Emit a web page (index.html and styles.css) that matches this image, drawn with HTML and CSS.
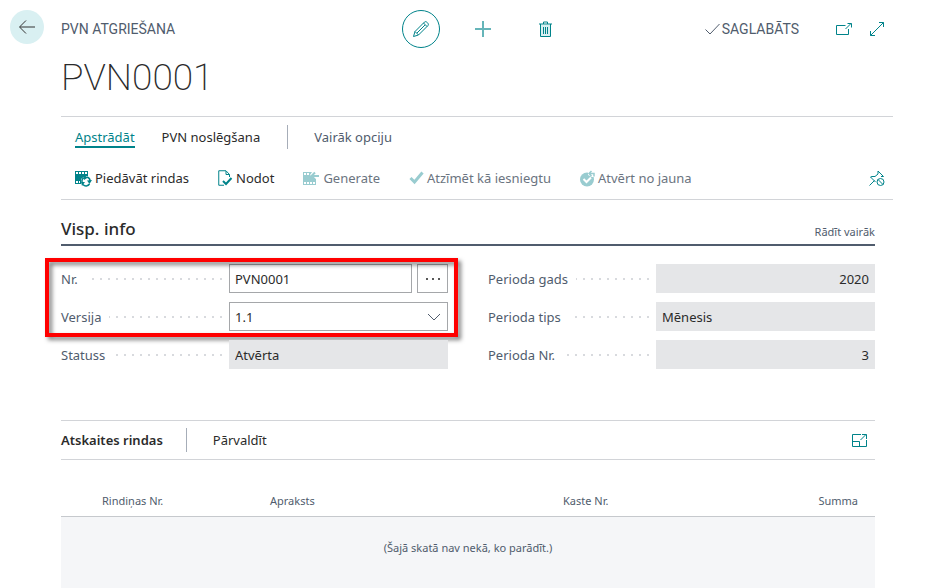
FILE: index.html
```html
<!DOCTYPE html>
<html lang="lv">
<head>
<meta charset="utf-8">
<title>PVN0001</title>
<link rel="stylesheet" href="styles.css">
</head>
<body>
<div class="page">
  <div class="side">
    <button class="back" type="button" aria-label="Atpakaļ">
      <svg width="18" height="16" viewBox="0 0 18 16"><path d="M17 8H2M8 1.500L1.500 8L8 14.500"/></svg>
    </button>
  </div>
  <main class="main">
    <header class="topbar">
      <span class="caption">PVN ATGRIEŠANA</span>
      <div class="tools">
        <button class="tool tool-edit" type="button" aria-label="Rediģēt">
          <svg width="18" height="18" viewBox="0 0 18 18"><path d="M1.500 16.500L3 11.500L12.500 2C14 .5 17.500 4 16 5.500L6.500 15ZM3 11.500L6.500 15M11.500 3L15 6.500M5 13L13 5"/></svg>
        </button>
        <button class="tool tool-add" type="button" aria-label="Jauns">
          <svg width="16" height="16" viewBox="0 0 16 16"><path d="M8 0V16M0 8H16"/></svg>
        </button>
        <button class="tool tool-delete" type="button" aria-label="Dzēst">
          <svg width="13" height="17" viewBox="0 0 13 17"><path class="tint" d="M1.500 3.500H11.500V16H1.500Z"/><path d="M0 3H13M4.500 3V1H8.500V3M1.500 3V15.500H11.500V3M4.500 6V13M6.500 6V13M8.500 6V13"/></svg>
        </button>
      </div>
      <div class="status">
        <span class="saved"><svg width="15" height="12" viewBox="0 0 15 12"><path d="M.5 6.500L5 11L14.500 1"/></svg>SAGLABĀTS</span>
        <button class="tool open" type="button" aria-label="Atvērt jaunā logā">
          <svg width="16" height="12" viewBox="0 0 16 12"><path d="M9.500 2.500H.5V11.500H12.500V6M9.500 6L15 .5M11.500 .5H15.500V4.500"/></svg>
        </button>
        <button class="tool" type="button" aria-label="Izvērst">
          <svg width="16" height="16" viewBox="0 0 16 16"><path d="M1.500 14.500L14.500 1.500M10 1.500H14.500V6M1.500 10V14.500H6"/></svg>
        </button>
      </div>
    </header>
    <h1 class="title">PVN0001</h1>

    <nav class="menu">
      <div class="tabs">
        <a class="tab tab-active" href="#">Apstrādāt</a>
        <a class="tab" href="#">PVN noslēgšana</a>
        <a class="tab tab-more" href="#">Vairāk opciju</a>
      </div>
      <div class="actions">
        <button class="action" type="button">
          <svg width="17" height="17" viewBox="0 0 17 17"><path class="fill" d="M0 1H13V6L10 6L6 9V14H0Z"/><path class="hole" d="M1 2H3V4H1ZM4 2H6V4H4ZM7 2H9V4H7ZM10 2H12V4H10ZM1 11H3V13H1ZM4 11H5V13H4Z"/><path class="line bold" d="M7 12A4 4 0 0 1 10 7.500M12 7A4 4 0 0 1 15 11M14.500 14A4 4 0 0 1 8 14.500"/><path class="fill" d="M9 5L13 7.500L9 10ZM17 10L14.500 14L12 10.500ZM6 12H10L7 16Z"/></svg>
          Piedāvāt rindas</button>
        <button class="action" type="button">
          <svg width="15" height="17" viewBox="0 0 15 17"><path class="line" d="M11.500 7V4.500L8 .75H.75V15.250H6M8 1V4.500H11.500"/><path class="line thick" d="M5 11L8 14L13.500 8"/></svg>
          Nodot</button>
        <button class="action action-off" type="button">
          <svg width="17" height="15" viewBox="0 0 17 15"><path class="fill" d="M0 1H9L7 4L11 8H13V14H0Z"/><path class="hole" d="M1 2H3V4H1ZM4 2H6V4H4ZM1 11H3V13H1ZM4 11H6V13H4ZM7 11H9V13H7ZM10 11H12V13H10Z"/><path class="line thick" d="M16 5H9M12 1.500L8.500 5L12 8.500"/></svg>
          Generate</button>
        <button class="action action-off" type="button">
          <svg width="15" height="14" viewBox="0 0 15 14"><path class="line heavy" d="M1.500 7L5.500 11L13.500 1.500"/></svg>
          Atzīmēt kā iesniegtu</button>
        <button class="action action-off" type="button">
          <svg width="15" height="17" viewBox="0 0 15 17"><circle class="fill" cx="7" cy="9.500" r="7"/><path class="hole" d="M8 0H15V7H12L8 5Z"/><path class="check" d="M3.500 9L6.500 12L11 7.500"/><path class="line bold" d="M9 3.500H14V6.500M11.500 1L9 3.500L11.500 6"/></svg>
          Atvērt no jauna</button>
        <button class="action pin" type="button" aria-label="Atspraust">
          <svg width="16" height="17" viewBox="0 0 16 17"><path class="line" d="M.5 15.500L5.500 10.500M6.500 12L1.500 7L3 6.500H6L9 4V1L14.500 6.500H12"/><circle class="line" cx="11.500" cy="12" r="3.500"/><path class="line" d="M9 9.500L14 14.500"/></svg>
        </button>
      </div>
    </nav>

    <div class="content">
      <section>
        <div class="section-head">
          <h2 class="section-title">Visp. info</h2>
          <a class="show-more" href="#">Rādīt vairāk</a>
        </div>
        <form class="fields">
          <div class="column">
            <div class="marked">
              <div class="field">
                <label class="label" for="nr">Nr.</label>
                <div class="value">
                  <input class="box" id="nr" type="text" value="PVN0001">
                  <button class="lookup" type="button" aria-label="Izvēlēties"><svg width="16" height="4" viewBox="0 0 16 4"><circle cx="2" cy="2" r="1"/><circle cx="8" cy="2" r="1"/><circle cx="14" cy="2" r="1"/></svg></button>
                </div>
              </div>
              <div class="field">
                <label class="label" for="versija">Versija</label>
                <div class="value">
                  <select class="box" id="versija"><option>1.1</option></select>
                  <svg class="chevron" width="14" height="8" viewBox="0 0 14 8"><path d="M1 1L7 7L13 1"/></svg>
                </div>
              </div>
            </div>
            <div class="field">
              <label class="label" for="statuss">Statuss</label>
              <div class="value"><input class="box box-off" id="statuss" type="text" value="Atvērta" readonly></div>
            </div>
          </div>
          <div class="column">
            <div class="field">
              <label class="label" for="gads">Perioda gads</label>
              <div class="value"><input class="box box-off number" id="gads" type="text" value="2020" readonly></div>
            </div>
            <div class="field">
              <label class="label" for="tips">Perioda tips</label>
              <div class="value"><input class="box box-off" id="tips" type="text" value="Mēnesis" readonly></div>
            </div>
            <div class="field">
              <label class="label" for="pnr">Perioda Nr.</label>
              <div class="value"><input class="box box-off number" id="pnr" type="text" value="3" readonly></div>
            </div>
          </div>
        </form>
      </section>

      <section class="lines">
        <div class="lines-bar">
          <h2 class="lines-title">Atskaites rindas</h2>
          <a class="manage" href="#">Pārvaldīt</a>
          <button class="tool focus" type="button" aria-label="Fokusa režīms">
            <svg width="15" height="13" viewBox="0 0 15 13"><path d="M9 .5H.5V12.500H14.500V6M.5 7.500H7.500V12.500M8.500 6L14 .5M10 .5H14.500V5"/></svg>
          </button>
        </div>
        <table class="grid">
          <thead>
            <tr><th class="col-line">Rindiņas Nr.</th><th class="col-text">Apraksts</th><th>Kaste Nr.</th><th class="col-sum">Summa</th></tr>
          </thead>
          <tbody>
            <tr><td class="empty" colspan="4">(Šajā skatā nav nekā, ko parādīt.)</td></tr>
          </tbody>
        </table>
      </section>
    </div>
  </main>
</div>
</body>
</html>
```
FILE: styles.css
```css
* { box-sizing: border-box; }

body {
  margin: 0;
  background: #fff;
  color: #2b2b2b;
  font: 13px/20px "Noto Sans", "Open Sans", sans-serif;
}

a { color: inherit; text-decoration: none; }

button {
  display: flex;
  align-items: center;
  justify-content: center;
  padding: 0;
  border: 0;
  background: none;
  color: inherit;
  font: inherit;
}

svg { display: block; flex: none; fill: none; stroke: currentColor; }

.page {
  display: grid;
  grid-template-columns: 51px 1fr;
  padding: 10px 37px 0 10px;
}

.back {
  width: 34px;
  height: 34px;
  border-radius: 50%;
  background: #d9f0f2;
  color: #333;
}

.topbar {
  display: grid;
  grid-template-columns: 1fr auto 1fr;
  align-items: center;
  height: 38px;
  color: #505c6d;
  font: 14px/20px Roboto, sans-serif;
}

.tools, .status { display: flex; align-items: center; }
.tool { color: #00838a; }
.tool-edit { width: 38px; height: 38px; border: 1px solid #00838a; border-radius: 50%; }
.tool-add { margin: 0 48px 0 35px; }
.tool-add svg { stroke: #66b5b9; stroke-width: 2; }
.tint { fill: #d9f0f2; stroke: none; }
.status { justify-content: flex-end; gap: 17px; padding-right: 8px; }
.saved { display: flex; align-items: center; gap: 2px; }
.open { margin-left: 20px; }

.title {
  margin: 0 0 8px;
  font: 200 37px/60px Roboto, sans-serif;
}

.menu { border: solid #d2d4d8; border-width: 1px 0; }
.tabs, .actions { display: flex; align-items: center; padding: 0 8px 0 14px; }
.tabs { height: 40px; gap: 27px; }
.tab-active { color: #00838a; box-shadow: inset 0 -2px #00838a; line-height: 22px; }
.tab-more { padding-left: 26px; border-left: 1px solid #a6adb8; line-height: 24px; color: #505c6d; }
.actions { height: 42px; gap: 29px; }
.action { gap: 3px; }
.action svg { color: #00838a; }
.action-off { color: #6b7480; }
.action-off svg { color: #99ccd0; }
.pin { margin-left: auto; }
.fill { fill: currentColor; stroke: none; }
.hole { fill: #fff; stroke: none; }
.check { stroke: #fff; stroke-width: 2; }
.bold { stroke-width: 1.5; }
.thick { stroke-width: 2; }
.heavy { stroke-width: 3; }

.content { margin-right: 18px; }

.section-head {
  display: flex;
  align-items: flex-end;
  justify-content: space-between;
  height: 46px;
  border-bottom: 2px solid #505c6d;
}
.section-title { margin: 0; font-size: 17px; font-weight: 500; line-height: 30px; }
.show-more { color: #505c6d; font-size: 11px; line-height: 24px; }

.fields {
  display: grid;
  grid-template-columns: 1fr 1fr;
  gap: 40px;
  padding-top: 18px;
}
.column, .marked { display: grid; gap: 9px; }
.marked { position: relative; }
.marked::after {
  content: "";
  position: absolute;
  inset: -6px -10px -6px -16px;
  border: 4px solid #f00;
  filter: drop-shadow(3px 3px 2px rgba(0, 0, 0, .5));
  pointer-events: none;
}
.field { display: grid; grid-template-columns: minmax(0, 168fr) minmax(0, 219fr); height: 29px; }
.label { display: flex; align-items: center; color: #505c6d; }
.label::after {
  content: "";
  flex: 1;
  height: 2px;
  margin: 0 7px 0 8px;
  background: repeating-linear-gradient(to left, #d8dade 0 2px, transparent 2px 8px);
}
.value { position: relative; display: flex; gap: 5px; }
.box {
  flex: 1;
  min-width: 0;
  height: 29px;
  padding: 0 5px;
  border: 1px solid #a5a7aa;
  border-radius: 0;
  appearance: none;
  background: #fff;
  color: #2b2b2b;
  font: inherit;
}
.box-off { border-color: #e5e6e8; background: #e5e6e8; }
.number { text-align: right; }
.lookup { width: 31px; border: 1px solid #a5a7aa; }
.lookup svg { fill: #212121; stroke: none; }
.chevron { position: absolute; right: 7px; top: 11px; color: #505c6d; pointer-events: none; }

.lines { margin-top: 51px; }
.lines-bar {
  display: flex;
  align-items: center;
  height: 40px;
  border: solid #d2d4d8;
  border-width: 1px 0;
}
.lines-title { margin: 0 23px 0 0; font-size: 13px; font-weight: 600; }
.manage { padding-left: 26px; border-left: 1px solid #a6adb8; line-height: 24px; }
.focus { margin: 0 8px 0 auto; }

.grid { width: 100%; border-collapse: separate; border-spacing: 0; font-size: 11px; color: #505c6d; }
.grid th {
  padding: 31px 0 5px;
  border-bottom: 1px solid #c6c9cd;
  font-weight: 400;
  text-align: left;
}
.grid .col-line { width: 209px; padding-left: 41px; }
.grid .col-text { width: 293px; }
.grid .col-sum { padding-right: 17px; text-align: right; }
.grid .empty { padding: 21px 0 30px; background: #f5f6f8; text-align: center; }
```
